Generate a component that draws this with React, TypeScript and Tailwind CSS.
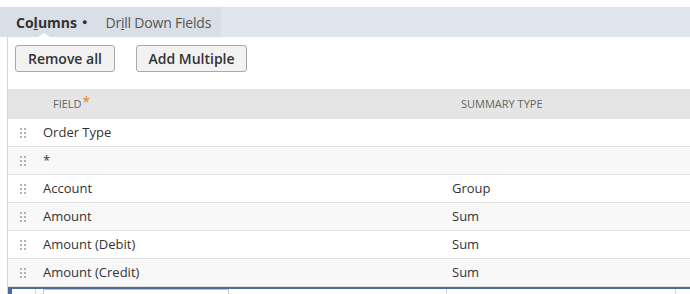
import React from 'react';

const rows = [
  { field: 'Order Type', summary: '' },
  { field: '*', summary: '' },
  { field: 'Account', summary: 'Group' },
  { field: 'Amount', summary: 'Sum' },
  { field: 'Amount (Debit)', summary: 'Sum' },
  { field: 'Amount (Credit)', summary: 'Sum' },
];

function DragHandle() {
  return (
    <svg width="7" height="10" viewBox="0 0 7 10" className="block">
      {[0, 4, 8].map((y) =>
        [0, 4].map((x) => <rect key={`${x}-${y}`} x={x} y={y} width="2" height="2" fill="#b4b4b4" />)
      )}
    </svg>
  );
}

export default function App() {
  return (
    <div
      className="w-[690px] h-[294px] overflow-hidden bg-white text-[#333]"
      style={{ fontFamily: '"Open Sans", "Liberation Sans", sans-serif' }}
    >
      {/* Tabs */}
      <div className="mt-[7px] h-[30px] flex bg-[#e0e5ee]">
        <div className="flex bg-[#dadfe7] pr-[10px]">
          <div className="relative flex items-center pl-4 pr-[10px] text-[14px] font-bold text-[#333]">
            <span>
              Co<u>l</u>umns
            </span>
            <span className="ml-[5px] text-[9px]">●</span>
            <div className="absolute left-[38px] bottom-0 w-0 h-0 border-l-[6px] border-r-[6px] border-b-[4px] border-l-transparent border-r-transparent border-b-white" />
          </div>
          <div className="flex items-center pl-[8px] text-[14px] tracking-[-0.2px] text-[#555]">
            <span>
              Dr<u>i</u>ll Down Fields
            </span>
          </div>
        </div>
      </div>

      {/* Body */}
      <div className="ml-[7px] border-l border-[#d6d6d6] h-[257px]">
        <div className="flex gap-[21px] pl-[7px] pt-[8px]">
          <button className="h-[27px] w-[100px] rounded-[3px] border border-[#a9a9a9] bg-[#f2f2f2] text-[14px] font-semibold text-[#333]">
            Remove all
          </button>
          <button className="h-[27px] w-[111px] rounded-[3px] border border-[#a9a9a9] bg-[#f2f2f2] text-[14px] font-semibold text-[#333]">
            Add Multiple
          </button>
        </div>

        <div className="mt-[17px]">
          <div className="grid grid-cols-[28px_408px_1fr] h-[30px] items-center bg-[#e5e5e5] text-[11px] text-[#666]">
            <div />
            <div className="pl-[17px] flex items-start">
              FIELD<span className="ml-[1px] -mt-[5px] text-[14px] text-[#e08a1e]">*</span>
            </div>
            <div className="pl-[17px]">SUMMARY TYPE</div>
          </div>

          {rows.map((r, i) => (
            <div
              key={i}
              className={`grid grid-cols-[28px_408px_1fr] h-[28px] items-center border-b border-[#e3e3e3] text-[13px] text-[#333] ${
                i % 2 === 1 ? 'bg-[#f8f8f8]' : 'bg-white'
              }`}
            >
              <div className="pl-[12px]">
                <DragHandle />
              </div>
              <div className="pl-[7px]">{r.field}</div>
              <div className="pl-[8px]">{r.summary}</div>
            </div>
          ))}

          <div className="h-[2px] bg-[#4d6b98]" />
          <div className="flex h-[10px]">
            <div className="w-[4px] bg-[#4d6b98]" />
            <div className="w-[24px] border-r border-[#d6d6d6]" />
            <div className="w-[411px] pl-[7px] border-r border-[#d6d6d6]">
              <div className="w-[186px] h-[10px] border border-[#c8c8c8]" />
            </div>
            <div className="w-[229px] border-r border-[#d6d6d6]" />
          </div>
        </div>
      </div>
    </div>
  );
}
